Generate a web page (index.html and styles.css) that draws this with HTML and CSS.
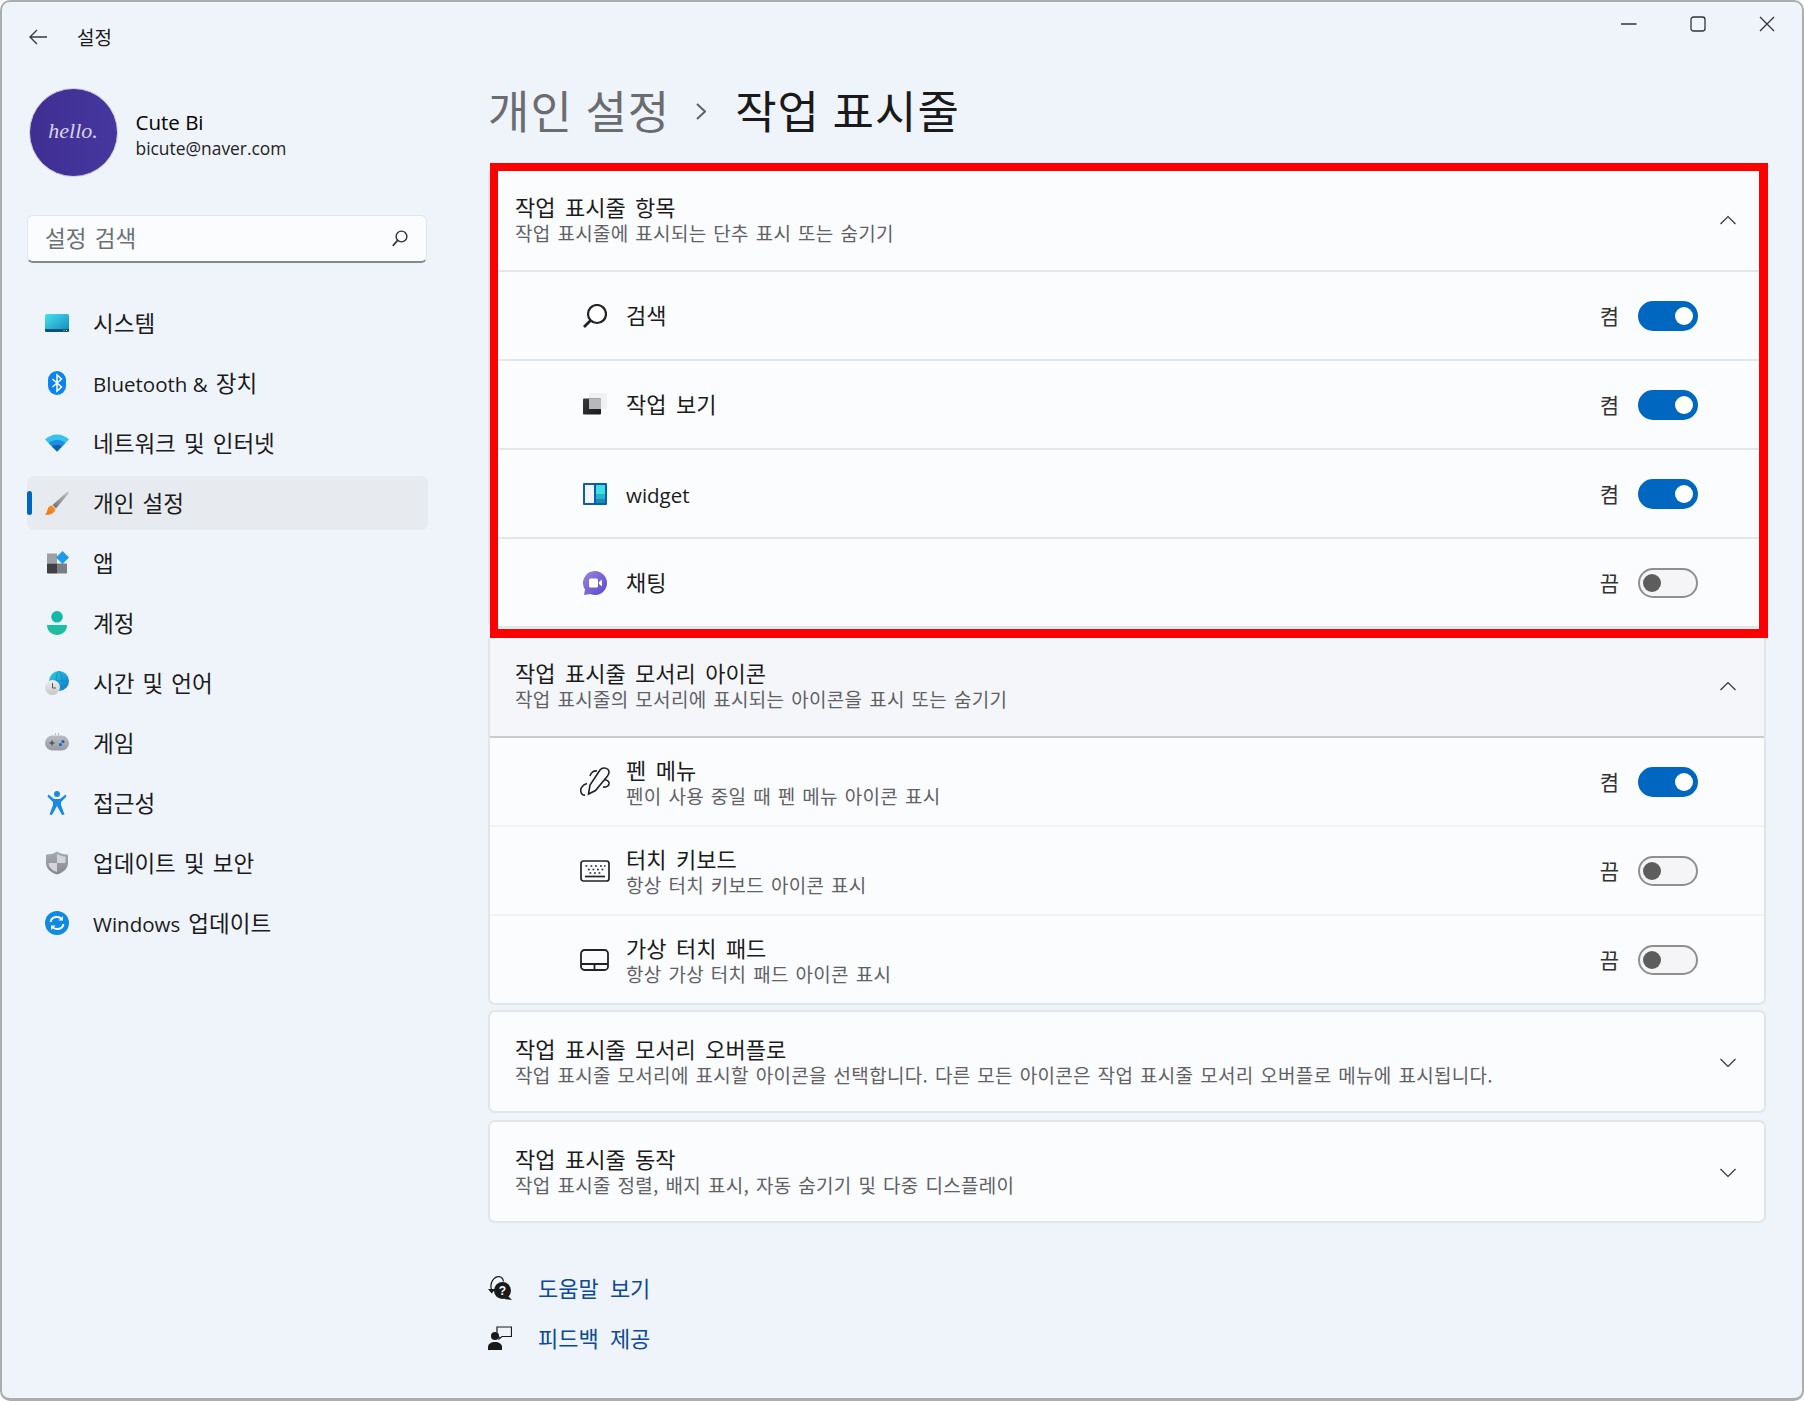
FILE: index.html
```html
<!DOCTYPE html>
<html lang="ko">
<head>
<meta charset="utf-8">
<title>설정</title>
<link rel="stylesheet" href="styles.css">
</head>
<body>
<div class="window">
  <header class="titlebar">
    <div class="titlebar-left">
      <svg class="back" width="18" height="16" viewBox="0 0 18 16"><path d="M8 1 1 8l7 7M1 8h17" fill="none" stroke="#3a3a3a" stroke-width="1.4"/></svg>
      <span class="app-name">설정</span>
    </div>
    <div class="controls">
      <svg width="16" height="16" viewBox="0 0 16 16"><path d="M0 8h15.5" stroke="#333" stroke-width="1.3"/></svg>
      <svg width="16" height="16" viewBox="0 0 16 16"><rect x="1" y="1" width="14" height="14" rx="2.5" fill="none" stroke="#333" stroke-width="1.3"/></svg>
      <svg width="16" height="16" viewBox="0 0 16 16"><path d="M1 1l14 14M15 1 1 15" stroke="#333" stroke-width="1.3"/></svg>
    </div>
  </header>
  <div class="body">
    <aside class="sidebar">
      <div class="profile">
        <div class="avatar"><span class="hello">hello.</span></div>
        <div class="profile-text">
          <div class="name lat">Cute Bi</div>
          <div class="email lat">bicute@naver.com</div>
        </div>
      </div>
      <div class="search">
        <span class="search-text">설정 검색</span>
        <svg width="16" height="17" viewBox="0 0 16 17"><circle cx="9.5" cy="6.5" r="5.4" fill="none" stroke="#333" stroke-width="1.4"/><path d="M5.6 10.4.8 15.9" stroke="#333" stroke-width="1.6"/></svg>
      </div>
      <nav class="nav">
        <a class="nav-item">
          <svg class="nav-icon" viewBox="0 0 24 24"><defs><linearGradient id="g1" x1="0" y1="0" x2="1" y2="1"><stop offset="0" stop-color="#45e3ea"/><stop offset="1" stop-color="#1585c0"/></linearGradient></defs><rect y="3" width="24" height="18" rx="1.5" fill="url(#g1)"/><path d="M0 18h24v1.8c0 .7-.5 1.2-1.2 1.2H1.200C.5 21 0 20.500 0 19.800z" fill="#0e4f7c"/><path d="M18.500 19.500h1M21 19.500h1" stroke="#9fd" stroke-width="1"/></svg>
          <span class="label">시스템</span>
        </a>
        <a class="nav-item">
          <svg class="nav-icon" viewBox="0 0 24 24"><rect x="3" y="0" width="18" height="24" rx="9" fill="#0a84f0"/><path d="M7.500 8l9 8-4.500 4V4l4.500 4-9 8" fill="none" stroke="#fff" stroke-width="1.500"/></svg>
          <span class="label"><span class="lat">Bluetooth &amp;</span> 장치</span>
        </a>
        <a class="nav-item">
          <svg class="nav-icon" viewBox="0 0 24 24"><path d="M0 8.500C3 5.500 7.300 3.500 12 3.500s9 2 12 5L12 20.500z" fill="#34c3ec"/><path d="M3.500 12C6 10 9 9 12 9s6 1 8.500 3L12 20.500z" fill="#1a8ee0"/><path d="M7 15.500c1.400-1 3.200-1.500 5-1.500s3.600.5 5 1.500l-5 5z" fill="#0f5fae"/></svg>
          <span class="label">네트워크 및 인터넷</span>
        </a>
        <a class="nav-item active">
          <svg class="nav-icon" viewBox="0 0 24 24"><defs><linearGradient id="g2" x1="1" y1="0" x2="0" y2="1"><stop offset="0" stop-color="#c9c9c9"/><stop offset="1" stop-color="#6d6d70"/></linearGradient><linearGradient id="g3" x1="1" y1="0" x2="0" y2="1"><stop offset="0" stop-color="#f59a1e"/><stop offset="1" stop-color="#ef6a1f"/></linearGradient></defs><path d="M22.500.5 24 2 11 17.500 7.500 14z" fill="url(#g2)"/><path d="M7 14.500l3.500 3.500c-.5 3-3.500 6-10.500 6 2-2 2-3.500 2.500-5.500.5-2.500 2.500-4 4.500-4z" fill="url(#g3)"/></svg>
          <span class="label">개인 설정</span>
        </a>
        <a class="nav-item">
          <svg class="nav-icon" viewBox="0 0 24 24"><path d="M2 2.500h10v10H2z" fill="#9da0a5"/><path d="M2 12.500h10v10H3c-.6 0-1-.4-1-1z" fill="#3f4044"/><path d="M12 12.500h10v9c0 .6-.4 1-1 1h-9z" fill="#7b7e84"/><path d="M17.500 0 24 6.500 17.500 13 11 6.500z" fill="#1e9bee"/></svg>
          <span class="label">앱</span>
        </a>
        <a class="nav-item">
          <svg class="nav-icon" viewBox="0 0 24 24"><defs><linearGradient id="g4" x1="0" y1="0" x2="0" y2="1"><stop offset="0" stop-color="#14c2a8"/><stop offset="1" stop-color="#2ab79c"/></linearGradient></defs><circle cx="12" cy="5.800" r="5.800" fill="#14b8a6"/><path d="M2.500 14h19c.3 0 .5.200.5.500 0 5-4.500 9.500-10 9.500S2 19.500 2 14.500c0-.3.200-.5.500-.5z" fill="url(#g4)"/></svg>
          <span class="label">계정</span>
        </a>
        <a class="nav-item">
          <svg class="nav-icon" viewBox="0 0 24 24"><defs><linearGradient id="g5" x1="0" y1="0" x2="1" y2="1"><stop offset="0" stop-color="#32d2dc"/><stop offset="1" stop-color="#0c74cc"/></linearGradient><linearGradient id="g10" x1="0" y1="0" x2="0" y2="1"><stop offset="0" stop-color="#f0f0f0"/><stop offset="1" stop-color="#c6c6c6"/></linearGradient></defs><circle cx="14" cy="10" r="10" fill="url(#g5)"/><path d="M4 10h20M14 0c-4 3-4 17 0 20M14 0c4 3 4 17 0 20" fill="none" stroke="#0e86c8" stroke-width=".7"/><circle cx="7.500" cy="16.500" r="7.500" fill="url(#g10)"/><path d="M7.500 12v5h3.500" fill="none" stroke="#555" stroke-width="1"/></svg>
          <span class="label">시간 및 언어</span>
        </a>
        <a class="nav-item">
          <svg class="nav-icon" viewBox="0 0 24 24"><defs><linearGradient id="g6" x1="0" y1="0" x2="0" y2="1"><stop offset="0" stop-color="#b9bdc2"/><stop offset="1" stop-color="#979ba1"/></linearGradient></defs><rect y="4.500" width="24" height="15" rx="7.500" fill="url(#g6)"/><path d="M4.500 12h5M7 9.500v5" stroke="#333" stroke-width="1"/><circle cx="18" cy="10.500" r="1.500" fill="#0d62c8"/><circle cx="15.500" cy="13.500" r="1.500" fill="#0d62c8"/><path d="M10 3h1M13 3h1" stroke="#666" stroke-width=".8"/></svg>
          <span class="label">게임</span>
        </a>
        <a class="nav-item">
          <svg class="nav-icon" viewBox="0 0 24 24"><circle cx="12" cy="3" r="3" fill="#1a8ae0"/><path d="M3.500 3.500 9 8h6l5.500-4.500 1 2L16 11v3l3.500 9.500-2.500.5-5-9-5 9-2.500-.5L8 14v-3L2.500 5.500z" fill="#1a8ae0"/></svg>
          <span class="label">접근성</span>
        </a>
        <a class="nav-item">
          <svg class="nav-icon" viewBox="0 0 24 24"><defs><linearGradient id="g7" x1="0" y1="0" x2="0" y2="1"><stop offset="0" stop-color="#a9acb1"/><stop offset="1" stop-color="#85888e"/></linearGradient></defs><path d="M12 .5c3 2 6.500 3 10 3 .5 0 1 .4 1 1V12c0 5-4 9.500-11 11.500C5 21.500 1 17 1 12V4.500c0-.6.500-1 1-1 3.500 0 7-1 10-3z" fill="url(#g7)"/><path d="M12 3c2.500 1.500 5.500 2.500 8.500 2.700V12H12zM12 12v9c-5-1.800-8.500-5-8.500-9z" fill="#d3d5d8"/></svg>
          <span class="label">업데이트 및 보안</span>
        </a>
        <a class="nav-item">
          <svg class="nav-icon" viewBox="0 0 24 24"><circle cx="12" cy="12" r="12" fill="#0f8ae0"/><path d="M5.500 11c.5-3 3-5 6.500-5 2 0 3.500.7 4.700 2M18.500 13c-.5 3-3 5-6.500 5-2 0-3.500-.7-4.700-2" fill="none" stroke="#fff" stroke-width="1.800"/><path d="M18 5v4.500h-4.500zM6 19v-4.500h4.500z" fill="#fff"/></svg>
          <span class="label"><span class="lat">Windows</span> 업데이트</span>
        </a>
      </nav>
    </aside>
    <main class="main">
      <h1 class="page-title"><span class="crumb">개인 설정</span><svg class="sep" width="10" height="17" viewBox="0 0 10 17"><path d="M1 1l8 7.500L1 16" fill="none" stroke="#5f6165" stroke-width="2"/></svg><span>작업 표시줄</span></h1>

      <section class="card highlighted">
        <div class="card-head">
          <div class="text-block">
            <div class="t">작업 표시줄 항목</div>
            <div class="s">작업 표시줄에 표시되는 단추 표시 또는 숨기기</div>
          </div>
          <svg class="chev" width="16" height="10" viewBox="0 0 16 10"><path d="M.5 9 8 1.500 15.500 9" fill="none" stroke="#333" stroke-width="1.200"/></svg>
        </div>
        <div class="row">
          <span class="row-icon"><svg width="24" height="24" viewBox="0 0 24 24"><circle cx="14" cy="10" r="9" fill="#fff" stroke="#222" stroke-width="2.200"/><path d="M7.500 16.500 1 23" stroke="#222" stroke-width="2.800"/></svg></span>
          <div class="text-block"><div class="t">검색</div></div>
          <span class="state">켬</span>
          <span class="toggle on"><i></i></span>
        </div>
        <div class="row">
          <span class="row-icon"><svg width="24" height="24" viewBox="0 0 24 24"><defs><linearGradient id="g8" x1="0" y1="0" x2="1" y2="1"><stop offset="0" stop-color="#3a3a3c"/><stop offset="1" stop-color="#1a1a1a"/></linearGradient></defs><rect x="6" y="0" width="18" height="16" rx="1" fill="#f0f1f3"/><rect y="5.500" width="18" height="16" rx="1" fill="url(#g8)"/><rect x="6" y="5.500" width="12" height="10.500" fill="#b8b9bc"/></svg></span>
          <div class="text-block"><div class="t">작업 보기</div></div>
          <span class="state">켬</span>
          <span class="toggle on"><i></i></span>
        </div>
        <div class="row">
          <span class="row-icon"><svg width="24" height="24" viewBox="0 0 24 24"><rect y="1" width="24" height="22" rx="1" fill="#0c5cb4"/><rect x="2" y="3" width="9" height="18" fill="#f2f4f7"/><rect x="13" y="3" width="9" height="9" fill="#3fe0e2"/><rect x="13" y="12" width="9" height="5" fill="#22b5c8"/><rect x="13" y="17" width="9" height="4" fill="#128fb0"/></svg></span>
          <div class="text-block low"><div class="t"><span class="lat">widget</span></div></div>
          <span class="state">켬</span>
          <span class="toggle on"><i></i></span>
        </div>
        <div class="row">
          <span class="row-icon"><svg width="24" height="24" viewBox="0 0 24 24"><defs><linearGradient id="g9" x1="0" y1="0" x2="1" y2="1"><stop offset="0" stop-color="#9a84d8"/><stop offset="1" stop-color="#5a48d0"/></linearGradient></defs><path d="M12 0a12 12 0 1 1-4.800 23L1 24l1-5.500A12 12 0 0 1 12 0z" fill="url(#g9)"/><rect x="6" y="7.500" width="9" height="9" rx="1.500" fill="#fff"/><path d="M16 11l3-2.500v7L16 13z" fill="#fff"/></svg></span>
          <div class="text-block"><div class="t">채팅</div></div>
          <span class="state">끔</span>
          <span class="toggle"><i></i></span>
        </div>
      </section>

      <section class="card">
        <div class="card-head shaded">
          <div class="text-block">
            <div class="t">작업 표시줄 모서리 아이콘</div>
            <div class="s">작업 표시줄의 모서리에 표시되는 아이콘을 표시 또는 숨기기</div>
          </div>
          <svg class="chev" width="16" height="10" viewBox="0 0 16 10"><path d="M.5 9 8 1.500 15.500 9" fill="none" stroke="#333" stroke-width="1.200"/></svg>
        </div>
        <div class="row light first-row">
          <span class="row-icon"><svg width="30" height="30" viewBox="0 0 30 30"><path d="M8.500 27 10 18 20 3c2-2.500 6-2.500 8-.5 2 2.500 1 4.500-.5 6.500L15.500 23.500z" fill="none" stroke="#222" stroke-width="1.600"/><path d="M10 9c1-3.500 4-5.500 7-5M7 16.500c-5 1.500-7 5.500-6 8.500.5 2.500 2.500 3.500 4 3M24.500 12.500c2.500.5 5 1.500 4.500 4.500-.5 2.500-3.500 3.500-6 3" fill="none" stroke="#222" stroke-width="1.600"/></svg></span>
          <div class="text-block two"><div class="t">펜 메뉴</div><div class="s">펜이 사용 중일 때 펜 메뉴 아이콘 표시</div></div>
          <span class="state">켬</span>
          <span class="toggle on"><i></i></span>
        </div>
        <div class="row light">
          <span class="row-icon"><svg width="30" height="30" viewBox="0 0 30 30"><rect x="1" y="5" width="28" height="20" rx="2.500" fill="none" stroke="#222" stroke-width="1.700"/><path d="M5 20.500h20" stroke="#222" stroke-width="1.700"/><path d="M5.500 10h1.800M10.500 10h1.800M15 10h1.800M20 10h1.800M24 10h1.500M8 13.500h1.800M12.500 13.500h1.800M17 13.500h1.800M21.500 13.500h1.800M9.500 17h1.800M14 17h1.800M18.500 17h1.800" stroke="#222" stroke-width="1.700"/></svg></span>
          <div class="text-block two"><div class="t">터치 키보드</div><div class="s">항상 터치 키보드 아이콘 표시</div></div>
          <span class="state">끔</span>
          <span class="toggle"><i></i></span>
        </div>
        <div class="row light">
          <span class="row-icon"><svg width="30" height="30" viewBox="0 0 30 30"><rect x="1" y="5" width="27" height="20" rx="3.500" fill="none" stroke="#222" stroke-width="1.800"/><path d="M1 19h27M14.500 19v6" stroke="#222" stroke-width="1.800"/></svg></span>
          <div class="text-block two"><div class="t">가상 터치 패드</div><div class="s">항상 가상 터치 패드 아이콘 표시</div></div>
          <span class="state">끔</span>
          <span class="toggle"><i></i></span>
        </div>
      </section>

      <section class="card wide-gap">
        <div class="card-head no-line">
          <div class="text-block">
            <div class="t">작업 표시줄 모서리 오버플로</div>
            <div class="s">작업 표시줄 모서리에 표시할 아이콘을 선택합니다. 다른 모든 아이콘은 작업 표시줄 모서리 오버플로 메뉴에 표시됩니다.</div>
          </div>
          <svg class="chev" width="16" height="10" viewBox="0 0 16 10"><path d="M.5 1 8 8.500 15.500 1" fill="none" stroke="#333" stroke-width="1.200"/></svg>
        </div>
      </section>

      <section class="card">
        <div class="card-head no-line">
          <div class="text-block">
            <div class="t">작업 표시줄 동작</div>
            <div class="s">작업 표시줄 정렬, 배지 표시, 자동 숨기기 및 다중 디스플레이</div>
          </div>
          <svg class="chev" width="16" height="10" viewBox="0 0 16 10"><path d="M.5 1 8 8.500 15.500 1" fill="none" stroke="#333" stroke-width="1.200"/></svg>
        </div>
      </section>

      <div class="links">
        <a class="link">
          <svg width="24" height="24" viewBox="0 0 24 24"><path d="M3.700 14C1 7 6 .5 11 .7c2 .1 4 1.800 4.500 4.800" fill="none" stroke="#1a1a1a" stroke-width="1.200"/><path d="M0 13h7.500l-3.800 4.500z" fill="#1a1a1a"/><circle cx="14.500" cy="14.500" r="8.500" fill="#1a1a1a"/><path d="M20 20l4 4-8-1z" fill="#1a1a1a"/><text x="14.500" y="19" class="qmark">?</text></svg>
          <span class="label">도움말 보기</span>
        </a>
        <a class="link">
          <svg width="24" height="24" viewBox="0 0 24 24"><circle cx="7" cy="10" r="4" fill="#1a1a1a"/><path d="M0 24v-3c0-3 3-5 7-5s7 2 7 5v3z" fill="#1a1a1a"/><path d="M9 6.500V1h14.500v9.500H14l-3 2.500v-2.500" fill="none" stroke="#1a1a1a" stroke-width="1.200"/></svg>
          <span class="label">피드백 제공</span>
        </a>
      </div>
    </main>
  </div>
</div>
</body>
</html>
```
FILE: styles.css
```css
* { box-sizing: border-box; }
html, body { margin: 0; padding: 0; background: #fff; }
body {
  width: 1804px;
  height: 1401px;
  font-family: "Noto Sans CJK KR", "Noto Sans", sans-serif;
  color: #1b1b1b;
  overflow: hidden;
}
.window {
  width: 1804px;
  height: 1401px;
  border: 2px solid #adadad;
  border-bottom-width: 3px;
  border-radius: 10px;
  background: #eff3fa;
  display: flex;
  flex-direction: column;
  overflow: hidden;
}
.lat {
  font-family: "Open Sans", "Noto Sans CJK KR", sans-serif;
  letter-spacing: 0;
  word-spacing: 0;
}
.label { padding-bottom: 2px; }
.titlebar {
  height: 70px;
  flex: none;
  display: flex;
  justify-content: space-between;
}
.titlebar-left {
  display: flex;
  align-items: center;
  padding-left: 27px;
  gap: 30px;
}
.app-name { font-size: 19px; padding-bottom: 2px; }
.controls {
  display: flex;
  gap: 53px;
  padding: 14px 27px 0 0;
  height: 30px;
  box-sizing: content-box;
}
.body { flex: 1; display: flex; min-height: 0; }
.sidebar { width: 486px; flex: none; padding: 16px 0 0 25px; }
.profile { display: flex; align-items: center; gap: 18px; padding-left: 1.500px; }
.avatar {
  width: 89px;
  height: 89px;
  border-radius: 50%;
  background: linear-gradient(90deg, #3f2f92, #46379f);
  border: 1px solid #cfc9e4;
  display: flex;
  align-items: center;
  justify-content: center;
}
.hello {
  font-family: "Liberation Serif", serif;
  font-style: italic;
  font-size: 22px;
  letter-spacing: 0;
  color: #d9d5f0;
  padding-bottom: 3px;
}
.profile-text { display: flex; flex-direction: column; padding-top: 4px; }
.name { font-size: 20.500px; line-height: 28px; font-weight: 500; color: #000; }
.email { font-size: 17.400px; line-height: 25px; color: #222; }
.search {
  margin-top: 38px;
  width: 400px;
  height: 48px;
  background: #fbfcfe;
  border: 1px solid #e2e5ea;
  border-bottom: 2px solid #85888d;
  border-radius: 6px;
  display: flex;
  align-items: center;
  justify-content: space-between;
  padding: 0 18px 0 17px;
}
.search-text { font-size: 22.500px; word-spacing: 2px; color: #6d6f73; padding-bottom: 3px; }
.nav { margin-top: 33px; display: flex; flex-direction: column; gap: 6px; width: 401px; }
.nav-item {
  position: relative;
  height: 54px;
  display: flex;
  align-items: center;
  padding-left: 18px;
  gap: 24px;
  font-size: 22.500px;
  word-spacing: 1.800px;
  border-radius: 7px;
  color: #1b1b1b;
}
.nav-item .lat { font-size: 20.500px; }
.nav-item.active { background: #e7ebef; }
.nav-item.active::before {
  content: "";
  position: absolute;
  left: 0;
  top: 15px;
  width: 5px;
  height: 24px;
  border-radius: 3px;
  background: #0067c0;
}
.nav-icon { width: 24px; height: 24px; flex: none; }
.main { flex: 1; padding-right: 36px; display: flex; flex-direction: column; min-width: 0; }
.page-title {
  margin: 8px 0 27px;
  height: 60px;
  display: flex;
  align-items: center;
  font-weight: 400;
  font-size: 45px;
  letter-spacing: 1px;
  word-spacing: -1px;
  color: #1a1a1a;
  padding-bottom: 2px;
}
.crumb { color: #6a6c70; }
.page-title .sep { margin: 5px 29px 0 26px; flex: none; }
.card {
  border: 2px solid #e2e5ea;
  border-radius: 7px;
  background: #fbfcfe;
  margin-bottom: 5px;
}
.wide-gap { margin-bottom: 7px; }
.highlighted { position: relative; z-index: 1; }
.highlighted::after {
  content: "";
  position: absolute;
  left: 0;
  right: -4px;
  top: -6px;
  bottom: -12px;
  border: solid #ff0000;
  border-width: 8px 9px 9px 8px;
  pointer-events: none;
}
.card-head {
  height: 101px;
  display: flex;
  align-items: center;
  justify-content: space-between;
  padding: 0 28px 0 25px;
}
.card-head.shaded { background: #f5f6fa; border-radius: 6px 6px 0 0; }
.card-head.no-line { height: 99px; }
.no-line .chev { margin-top: 2px; }
.text-block { display: flex; flex-direction: column; }
.card-head .text-block { padding-bottom: 1px; }
.t { font-size: 22px; line-height: 27px; word-spacing: 3.300px; color: #1b1b1b; }
.t .lat { font-size: 20.500px; }
.s { font-size: 19px; line-height: 26px; letter-spacing: .3px; word-spacing: 1.200px; color: #5f6165; }
.row {
  height: 89px;
  border-top: 2px solid #e2e7ec;
  display: flex;
  align-items: center;
  padding: 0 66px 0 90px;
}
.row.light { border-top-color: #f1f3f7; }
.row.first-row { border-top-color: #c9cbd0; }
.row-icon {
  width: 30px;
  height: 30px;
  flex: none;
  margin-right: 16px;
  display: flex;
  align-items: center;
  justify-content: center;
}
.row .text-block { flex: 1; padding-bottom: 2px; }
.row .text-block.two { padding: 1px 0 0; }
.row .text-block.low { padding: 1px 0 0; }
.state { font-size: 21px; margin-right: 19px; color: #333; padding-bottom: 2px; }
.toggle {
  width: 60px;
  height: 30px;
  border-radius: 15px;
  border: 2px solid #8f8f8f;
  background: #f5f5f7;
  display: flex;
  align-items: center;
  padding: 0 3px;
}
.toggle i { width: 18px; height: 18px; border-radius: 50%; background: #5d5d5d; display: block; }
.toggle.on { background: #0067c0; border-color: #0067c0; justify-content: flex-end; }
.toggle.on i { background: #fff; }
.links { margin-top: 42px; display: flex; flex-direction: column; gap: 14px; }
.link {
  display: flex;
  align-items: center;
  gap: 26px;
  height: 36px;
  font-size: 22px;
  word-spacing: 5px;
  color: #0b4a96;
}
.qmark { font: 700 12px "Liberation Sans", sans-serif; fill: #fff; text-anchor: middle; }
```
